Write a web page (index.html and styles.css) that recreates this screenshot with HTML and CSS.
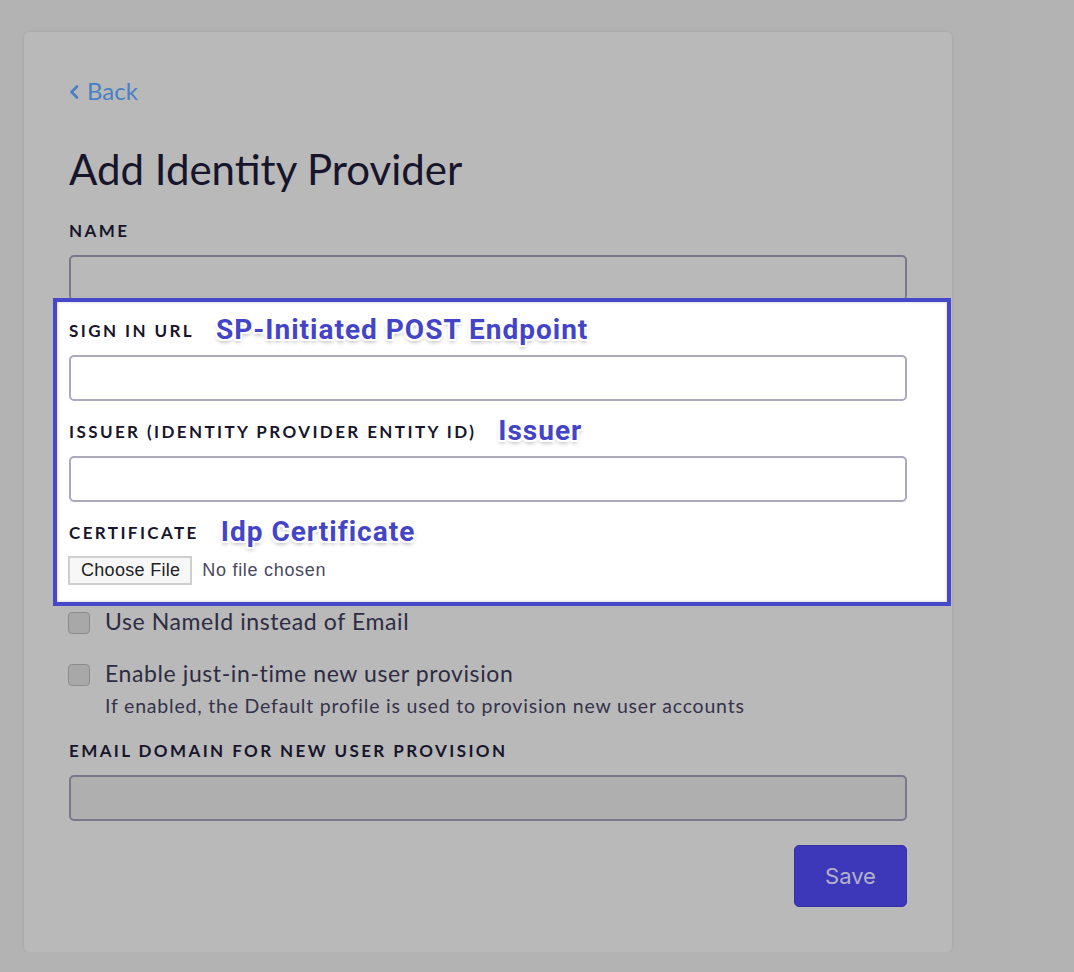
FILE: index.html
```html
<!DOCTYPE html>
<html lang="en">
<head>
  <meta charset="UTF-8" />
  <title>Add Identity Provider</title>
  <link rel="stylesheet" href="styles.css">
</head>
<body>
  <div class="card">
    <a class="back-link" href="#">
      <svg class="chevron" width="10" height="14" viewBox="0 0 10 14">
        <path d="M8 1.5 L2.5 7 L8 12.5" fill="none" stroke="currentColor" stroke-width="2.6" stroke-linecap="round" stroke-linejoin="round"/>
      </svg>
      Back
    </a>

    <h1>Add Identity Provider</h1>

    <div class="field">
      <div class="label-row"><label for="name">Name</label></div>
      <input type="text" id="name" class="text-input" />
    </div>

    <!-- highlighted block with SAML annotations -->
    <div class="highlight">
      <div class="field">
        <div class="label-row">
          <label for="sign-in-url">Sign in URL</label>
          <span class="note">SP-Initiated POST Endpoint</span>
        </div>
        <input type="text" id="sign-in-url" class="text-input" />
      </div>
      <div class="field">
        <div class="label-row">
          <label for="issuer">Issuer (Identity Provider Entity ID)</label>
          <span class="note">Issuer</span>
        </div>
        <input type="text" id="issuer" class="text-input" />
      </div>
      <div class="field">
        <div class="label-row">
          <label>Certificate</label>
          <span class="note">Idp Certificate</span>
        </div>
        <div class="file-row">
          <span class="file-button">Choose File</span>
          <span class="file-status">No file chosen</span>
        </div>
      </div>
    </div>

    <div class="check-row">
      <input type="checkbox" id="use-nameid" class="check" />
      <label for="use-nameid">Use NameId instead of Email</label>
    </div>

    <div class="check-row second">
      <input type="checkbox" id="jit" class="check" />
      <div>
        <label for="jit">Enable just-in-time new user provision</label>
        <p class="help">If enabled, the Default profile is used to provision new user accounts</p>
      </div>
    </div>

    <div class="field email-field">
      <div class="label-row"><label for="email-domain">Email domain for new user provision</label></div>
      <input type="text" id="email-domain" class="text-input disabled" disabled />
    </div>

    <div class="actions">
      <button class="save-button">Save</button>
    </div>
  </div>
</body>
</html>
```

FILE: styles.css
```css
body {
  margin: 0;
  padding: 32px 0 0 24px;
  background-color: #b3b3b3;
  font-family: Lato, "Open Sans", sans-serif;
  color: #17152c;
}
.card {
  box-sizing: border-box;
  width: 928px;
  height: 920px;
  padding: 46px 45px 0 45px;
  background-color: #b9b9b9;
  border-radius: 5px;
  box-shadow: 0 0 3px rgba(0,0,0,0.1);
}
.back-link {
  display: inline-flex;
  align-items: center;
  gap: 8px;
  color: #4a80c4;
  text-decoration: none;
  font-size: 24px;
  line-height: 26px;
}
.chevron {
  margin-top: 1px;
}
h1 {
  margin: 40px 0 0 0;
  font-size: 42px;
  font-weight: 400;
  line-height: 50px;
  color: #17152c;
}
.field {
  margin-top: 26px;
}
.label-row {
  display: flex;
  align-items: center;
  gap: 22px;
  height: 21px;
}
.label-row label {
  font-size: 17px;
  line-height: 21px;
  font-weight: 700;
  letter-spacing: 2.4px;
  text-transform: uppercase;
  color: #17152c;
}
.text-input {
  display: block;
  box-sizing: border-box;
  width: 838px;
  height: 46px;
  margin-top: 14px;
  border: 2px solid #7b7989;
  border-radius: 5px;
  background: transparent;
  font-size: 16px;
}
.text-input.disabled {
  background-color: #afafaf;
}
/* annotation box drawn over the form */
.highlight {
  margin: -3px -44px 0 -16px;
  padding: 0 40px 17px 12px;
  border: 4px solid #4647c9;
  background: #fff;
  box-shadow: inset 0 0 3px rgba(0,0,0,0.25);
}
.highlight .field {
  margin-top: 20px;
}
.highlight .field:first-child {
  margin-top: 18px;
}
.highlight .text-input {
  border-color: #aba9ba;
}
.note {
  position: relative;
  top: -1px;
  font-family: Roboto, "Liberation Sans", sans-serif;
  font-weight: 700;
  font-size: 28px;
  letter-spacing: 1px;
  line-height: 20px;
  color: #4444c8;
  text-shadow:
    2px 0 0 #fff, -2px 0 0 #fff, 0 2px 0 #fff, 0 -2px 0 #fff,
    2px 2px 0 #fff, -2px -2px 0 #fff, 2px -2px 0 #fff, -2px 2px 0 #fff,
    0 3px 4px rgba(0,0,0,0.35);
}
.file-row {
  display: flex;
  align-items: center;
  gap: 10px;
  margin: 13px 0 0 -1px;
}
.file-button {
  box-sizing: border-box;
  height: 29px;
  padding: 0 10px 0 11px;
  line-height: 25px;
  border: 2px solid #cfcfcf;
  background: #f7f7f7;
  font-family: "Liberation Sans", sans-serif;
  font-size: 18px;
  letter-spacing: 0.3px;
  color: #222;
}
.file-status {
  font-family: "Liberation Sans", sans-serif;
  font-size: 18px;
  letter-spacing: 0.7px;
  color: #4a4860;
}
.check-row {
  display: flex;
  align-items: flex-start;
  gap: 15px;
  margin: 3px 0 0 -1px;
  font-size: 23px;
  letter-spacing: 0.6px;
  line-height: 24px;
  color: #2e2c42;
}
.check-row.second {
  margin-top: 27px;
}
.check {
  appearance: none;
  box-sizing: border-box;
  flex-shrink: 0;
  width: 22px;
  height: 22px;
  margin: 3px 0 0 0;
  border: 1px solid #8c8c8c;
  border-radius: 4px;
  background: #a8a8a8;
}
.help {
  margin: 10px 0 0 0;
  font-size: 19.5px;
  letter-spacing: 0.8px;
  line-height: 22px;
  color: #35334a;
}
.email-field {
  margin-top: 23px;
}
.actions {
  display: flex;
  justify-content: flex-end;
  margin-top: 24px;
}
.save-button {
  width: 113px;
  height: 62px;
  border: 1px solid #3530a8;
  border-radius: 5px;
  background-color: #3d37ba;
  color: #b4b2c8;
  font-family: Inter, sans-serif;
  font-size: 22px;
}
```
